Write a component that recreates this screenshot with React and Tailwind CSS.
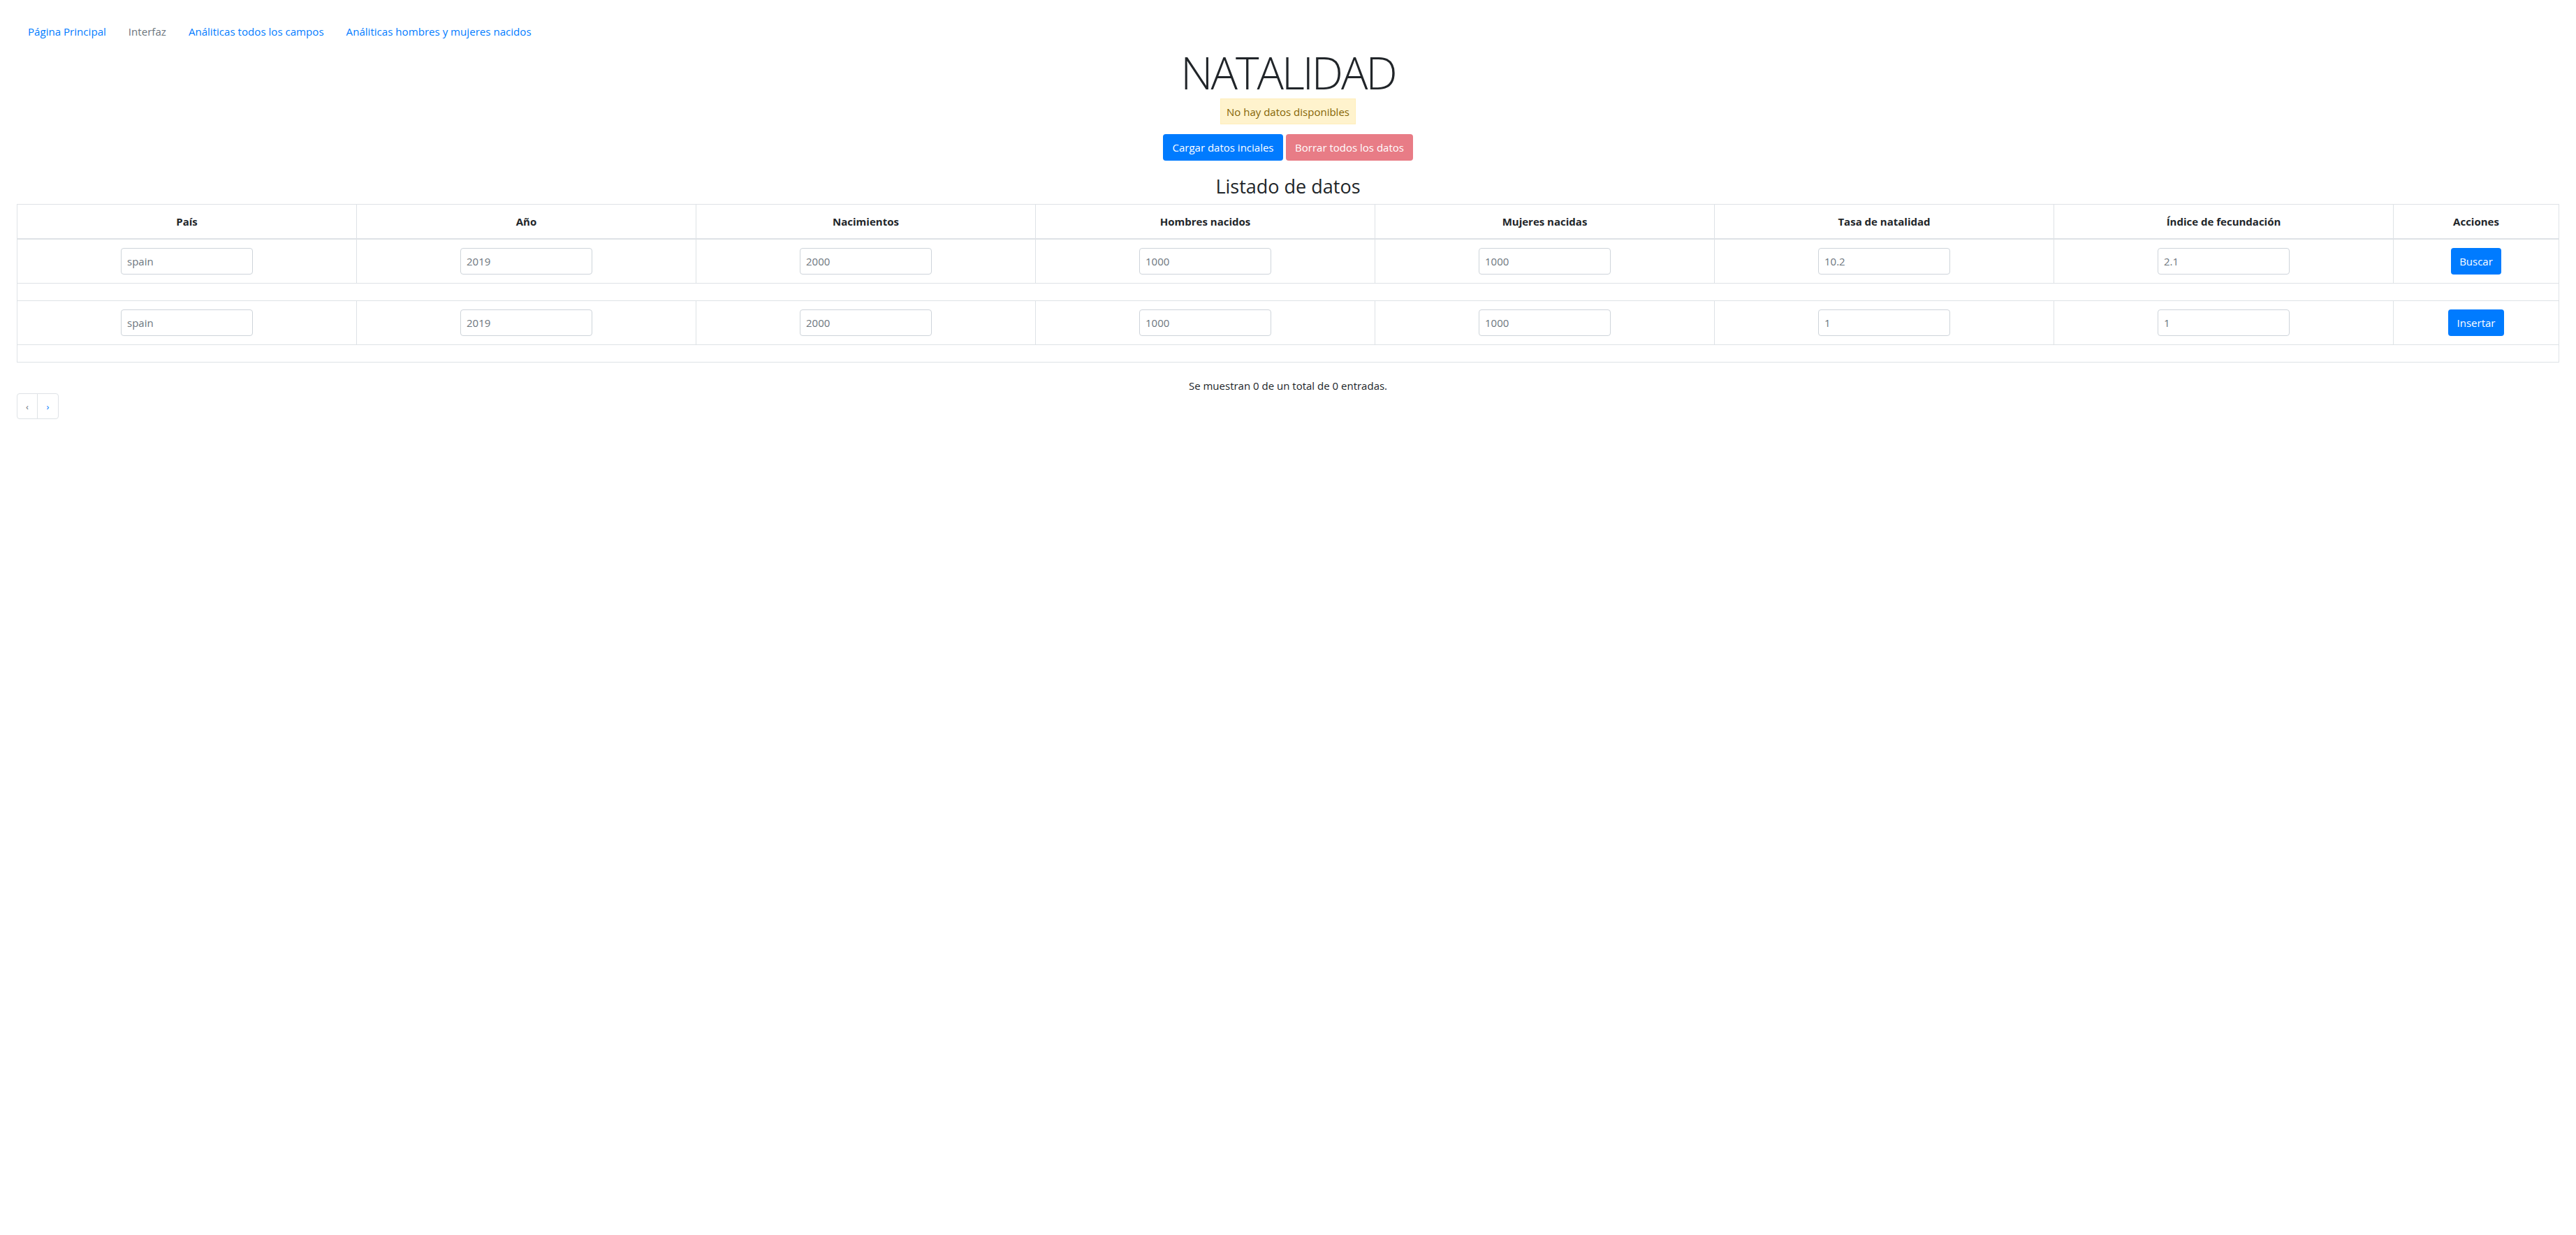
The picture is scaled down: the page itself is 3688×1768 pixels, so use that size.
import React from "react";

const headers = [
  "País",
  "Año",
  "Nacimientos",
  "Hombres nacidos",
  "Mujeres nacidas",
  "Tasa de natalidad",
  "Índice de fecundación",
  "Acciones",
];

const rows = [
  { vals: ["spain", "2019", "2000", "1000", "1000", "10.2", "2.1"], action: "Buscar", bw: "w-[72px]" },
  { vals: ["spain", "2019", "2000", "1000", "1000", "1", "1"], action: "Insertar", bw: "w-[80px]" },
];

function Cell({ value }) {
  return (
    <td className="border border-[#dee2e6] py-3 text-center align-middle">
      <input
        type="text"
        placeholder={value}
        className="mx-auto block h-[38px] w-[189px] rounded-[4px] border border-[#ced4da] bg-white pl-[8px] text-[15px] text-[#495057] outline-none placeholder:text-[#6c757d]"
      />
    </td>
  );
}

export default function App() {
  return (
    <div className="min-h-screen bg-white font-['Open_Sans','Noto_Sans',sans-serif] text-[15px] leading-6 text-[#212529]">
      <nav className="flex pl-[24px] pt-[33px]">
        <a className="px-4 text-[15.1px] leading-6 text-[#007bff]" href="#">Página Principal</a>
        <span className="px-4 text-[15.1px] leading-6 text-[#6c757d]">Interfaz</span>
        <a className="px-4 text-[15.1px] leading-6 text-[#007bff]" href="#">Análiticas todos los campos</a>
        <a className="px-4 text-[15.1px] leading-6 text-[#007bff]" href="#">Análiticas hombres y mujeres nacidos</a>
      </nav>

      <div className="flex flex-col items-center">
        <h1 className="mt-[16px] text-[64px] font-light leading-[62px] tracking-[-3px] text-[#212529]">NATALIDAD</h1>
        <div className="mt-[6px] flex h-[37px] w-[194px] items-center justify-center border border-[#ffeeba] bg-[#fff3cd] text-[15px] text-[#856404]">
          No hay datos disponibles
        </div>
        <div className="mt-[14px] flex gap-[4px]">
          <button className="h-[38px] w-[172px] rounded-[4px] bg-[#007bff] text-[15px] text-white">Cargar datos inciales</button>
          <button className="h-[38px] w-[182px] rounded-[4px] bg-[#e87c86] text-[15px] text-white">Borrar todos los datos</button>
        </div>
        <h3 className="mt-[21px] text-[27px] font-medium leading-[32px] text-[#212529]">Listado de datos</h3>
      </div>

      <div className="mx-[24px] mt-[9px]">
        <table className="w-full table-fixed border-collapse border border-[#dee2e6]">
          <colgroup>
            <col className="w-[486px]" />
            <col className="w-[486px]" />
            <col className="w-[486px]" />
            <col className="w-[486px]" />
            <col className="w-[486px]" />
            <col className="w-[486px]" />
            <col className="w-[486px]" />
            <col />
          </colgroup>
          <thead>
            <tr>
              {headers.map((h) => (
                <th key={h} className="border border-b-2 border-[#dee2e6] py-3 text-center text-[15px] font-bold leading-6">
                  {h}
                </th>
              ))}
            </tr>
          </thead>
          <tbody>
            {rows.map((r, i) => (
              <React.Fragment key={i}>
                <tr>
                  {r.vals.map((v, j) => (
                    <Cell key={j} value={v} />
                  ))}
                  <td className="border border-[#dee2e6] py-3 text-center align-middle">
                    <button className={`mx-auto block h-[38px] ${r.bw} rounded-[4px] bg-[#007bff] text-[15px] text-white`}>
                      {r.action}
                    </button>
                  </td>
                </tr>
                <tr>
                  <td colSpan={8} className="border border-[#dee2e6] py-3"></td>
                </tr>
              </React.Fragment>
            ))}
          </tbody>
        </table>
      </div>

      <p className="mt-[23px] text-center text-[15px] leading-5">Se muestran 0 de un total de 0 entradas.</p>

      <ul className="ml-[24px] mt-[1px] flex">
        <li className="flex h-[37px] w-[30px] items-center justify-center rounded-l-[4px] border border-[#dee2e6] text-[13px] text-[#6c757d]">‹</li>
        <li className="-ml-px flex h-[37px] w-[31px] items-center justify-center rounded-r-[4px] border border-[#dee2e6] text-[13px] text-[#007bff]">›</li>
      </ul>
    </div>
  );
}
